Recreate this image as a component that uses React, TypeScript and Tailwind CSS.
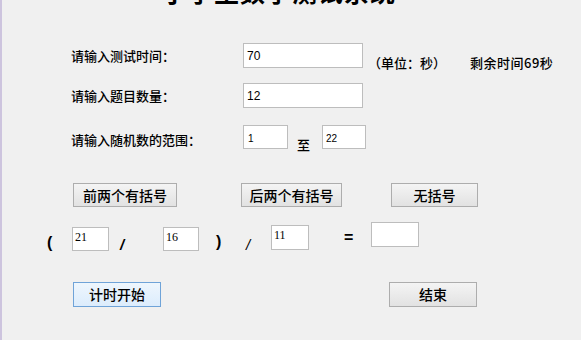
import React from 'react'

const cjk = { fontFamily: '"Noto Sans CJK SC", "Liberation Sans", sans-serif' }
const latin = { fontFamily: '"Liberation Sans", "Noto Sans CJK SC", sans-serif' }
const serif = { fontFamily: '"Liberation Serif", "Noto Sans CJK SC", serif' }

function Box({ value, className, style, textClass }: { value?: string; className: string; style?: React.CSSProperties; textClass?: string }) {
  return (
    <div className={'shrink-0 bg-white border border-[#bdbdbd] text-black ' + className} style={style}>
      <span className={textClass}>{value}</span>
    </div>
  )
}

function WinButton({ label, className, focused }: { label: string; className: string; focused?: boolean }) {
  return (
    <button
      type="button"
      className={
        'shrink-0 flex items-center justify-center text-[14px] font-medium text-black border ' +
        (focused
          ? 'border-[#6fa3d8] bg-gradient-to-b from-[#eef6fd] to-[#dcecfc] '
          : 'border-[#adadad] bg-gradient-to-b from-[#f4f4f4] to-[#e2e2e2] ') +
        className
      }
      style={cjk}
    >
      {label}
    </button>
  )
}

export default function App() {
  return (
    <div className="w-[581px] h-[340px] bg-[#f0f0f0] border-l-2 border-[#cdc4de] overflow-hidden flex flex-col text-black font-medium" style={cjk}>
      {/* title, cut off by the top edge */}
      <div className="-mt-[21px] ml-[160px] text-[25px] leading-[24px] font-bold tracking-[1px] whitespace-nowrap">
        小学生数学测试系统
      </div>

      {/* test time */}
      <div className="mt-[40px] h-[25px] flex items-start">
        <div className="ml-[69px] w-[172px] text-[13px] leading-[25px]">请输入测试时间：</div>
        <Box value="70" className="w-[120px] h-[25px] pl-[3px] flex items-center font-normal" textClass="text-[12px]" style={latin} />
        <div className="ml-[5px] mt-[7px] text-[13px] leading-[25px] whitespace-nowrap">（单位：秒）</div>
        <div className="ml-[24px] mt-[7px] text-[13px] leading-[25px] whitespace-nowrap tracking-[0.5px]">剩余时间69秒</div>
      </div>

      {/* question count */}
      <div className="mt-[15px] h-[25px] flex items-start">
        <div className="ml-[69px] w-[172px] text-[13px] leading-[25px]">请输入题目数量：</div>
        <Box value="12" className="w-[120px] h-[25px] pl-[3px] flex items-center font-normal" textClass="text-[12px]" style={latin} />
      </div>

      {/* random range */}
      <div className="mt-[17px] h-[24px] flex items-start">
        <div className="ml-[69px] mt-[2px] w-[172px] text-[13px] leading-[25px]">请输入随机数的范围：</div>
        <Box value="1" className="w-[45px] h-[24px] pl-[4px] pt-[4px] leading-[14px] font-normal" textClass="text-[10px]" style={latin} />
        <div className="ml-[9px] mt-[7px] text-[13px] leading-[25px]">至</div>
        <Box value="22" className="ml-[12px] w-[44px] h-[24px] pl-[3px] pt-[4px] leading-[14px] font-normal" textClass="text-[10px]" style={latin} />
      </div>

      {/* bracket buttons */}
      <div className="mt-[34px] flex items-start">
        <WinButton label="前两个有括号" className="ml-[71px] w-[104px] h-[24px]" />
        <WinButton label="后两个有括号" className="ml-[64px] w-[101px] h-[24px]" />
        <WinButton label="无括号" className="ml-[49px] w-[87px] h-[24px]" />
      </div>

      {/* expression */}
      <div className="mt-[15px] h-[30px] flex items-start" style={latin}>
        <span className="ml-[45px] w-[25px] mt-[13px] text-[16px] leading-[16px] font-bold">(</span>
        <Box value="21" className="mt-[5px] w-[37px] h-[24px] pl-[2px] pt-[1px] leading-[14px] font-normal" textClass="text-[12px]" style={serif} />
        <span className="w-[54px] pl-[11px] mt-[15px] text-[15px] leading-[15px] font-bold italic">/</span>
        <Box value="16" className="mt-[5px] w-[36px] h-[24px] pl-[2px] pt-[1px] leading-[14px] font-normal" textClass="text-[12px]" style={serif} />
        <span className="w-[47px] pl-[17px] mt-[12px] text-[16px] leading-[16px] font-bold">)</span>
        <span className="w-[25px] mt-[15px] text-[15px] leading-[15px] italic font-normal">/</span>
        <Box value="11" className="mt-[3px] w-[38px] h-[25px] pl-[2px] pt-[1px] leading-[14px] font-normal" textClass="text-[12px]" style={serif} />
        <span className="w-[62px] pl-[35px] mt-[8px] text-[16px] leading-[16px] font-bold">=</span>
        <Box className="w-[48px] h-[25px]" />
      </div>

      {/* start / stop */}
      <div className="mt-[30px] flex items-start">
        <WinButton label="计时开始" className="ml-[71px] w-[88px] h-[25px]" focused />
        <WinButton label="结束" className="ml-[228px] w-[88px] h-[25px]" />
      </div>
    </div>
  )
}
